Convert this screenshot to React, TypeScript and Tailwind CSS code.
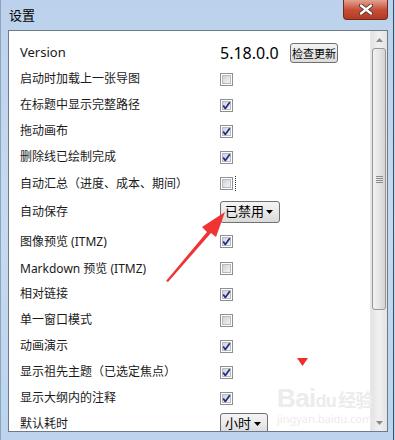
import React from 'react';

type Row =
  | { kind: 'check'; label: string; checked: boolean; h: number; focus?: boolean }
  | { kind: 'select'; label: string; value: string; h: number; w: string };

const rows: Row[] = [
  { kind: 'check', label: '启动时加载上一张导图', checked: false, h: 26 },
  { kind: 'check', label: '在标题中显示完整路径', checked: true, h: 26 },
  { kind: 'check', label: '拖动画布', checked: true, h: 26 },
  { kind: 'check', label: '删除线已绘制完成', checked: true, h: 26 },
  { kind: 'check', label: '自动汇总（进度、成本、期间）', checked: false, h: 27, focus: true },
  { kind: 'select', label: '自动保存', value: '已禁用', h: 30, w: 'w-[60px]' },
  { kind: 'check', label: '图像预览 (ITMZ)', checked: true, h: 29 },
  { kind: 'check', label: 'Markdown 预览 (ITMZ)', checked: false, h: 25 },
  { kind: 'check', label: '相对链接', checked: true, h: 26 },
  { kind: 'check', label: '单一窗口模式', checked: false, h: 26 },
  { kind: 'check', label: '动画演示', checked: true, h: 26 },
  { kind: 'check', label: '显示祖先主题（已选定焦点）', checked: true, h: 26 },
  { kind: 'check', label: '显示大纲内的注释', checked: true, h: 26 },
  { kind: 'select', label: '默认耗时', value: '小时', h: 26, w: 'w-[48px]' },
];

function CheckBox({ checked }: { checked: boolean }) {
  return (
    <svg width="13" height="13" viewBox="0 0 13 13">
      <defs>
        <linearGradient id="cbg" x1="0" y1="0" x2="1" y2="1">
          <stop offset="0" stopColor="#cbcfd5" />
          <stop offset="1" stopColor="#f6f6f6" />
        </linearGradient>
      </defs>
      <rect x="0.5" y="0.5" width="12" height="12" fill="#fff" stroke="#8e8f8f" />
      <rect x="2.5" y="2.5" width="8" height="8" fill="url(#cbg)" stroke="#b6bbc2" strokeWidth="1" />
      {checked && (
        <path d="M3.2 6.6 L5.3 9.4 L9.8 3.2" fill="none" stroke="#242a82" strokeWidth="1.7" strokeLinejoin="round" />
      )}
    </svg>
  );
}

function Select({ value, w }: { value: string; w: string }) {
  return (
    <div
      className={`${w} h-[22px] flex items-center justify-between pl-[4px] pr-[6px] rounded-[3px] border border-[#707070] bg-gradient-to-b from-[#f4f4f4] via-[#e9e9e9] to-[#d9d9d9] text-[13px] text-black`}
    >
      <span>{value}</span>
      <svg width="7" height="4" viewBox="0 0 7 4">
        <path d="M0 0 H7 L3.5 4 Z" fill="#000" />
      </svg>
    </div>
  );
}

export default function App() {
  return (
    <div
      className="relative w-[395px] h-[440px] overflow-hidden bg-gradient-to-b from-[#bcd2ec] via-[#c6daef] to-[#bcd4ee] border-l border-[#8ea3bd]"
      style={{ fontFamily: '"Noto Sans", "Noto Sans CJK SC", sans-serif' }}
    >
      {/* title bar */}
      <div className="h-[30px] flex items-start justify-between">
        <div className="pl-[8px] pt-[5px] text-[13px] text-black" style={{ fontFamily: '"Noto Sans CJK SC", sans-serif' }}>
          设置
        </div>
        <div className="mr-[7px] w-[45px] h-[20px] rounded-b-[4px] border border-t-0 border-[#6b2a22] bg-gradient-to-b from-[#e3a290] via-[#c7503a] to-[#b53a22] flex items-center justify-center">
          <svg width="14" height="11" viewBox="0 0 14 11">
            <path d="M2 1.5 L12 9.5 M12 1.5 L2 9.5" stroke="#4a2a28" strokeWidth="4" strokeLinecap="round" />
            <path d="M2 1.5 L12 9.5 M12 1.5 L2 9.5" stroke="#ffffff" strokeWidth="2.4" strokeLinecap="round" />
          </svg>
        </div>
      </div>

      {/* client area */}
      <div className="ml-[7px] mr-[7px] h-[402px] border border-[#6d7a89] bg-white flex">
        <div className="flex-1 pt-[9px] pl-[11px] flex flex-col overflow-hidden text-[12px] text-[#1a1a1a]">
          <div className="h-[26px] shrink-0 flex items-center">
            <span className="w-[200px] text-[13px]">Version</span>
            <span className="w-[70px] text-[16px] text-black">5.18.0.0</span>
            <button
              className="h-[20px] px-[1px] rounded-[3px] border border-[#707070] bg-gradient-to-b from-[#f3f3f3] to-[#dcdcdc] text-[11px] text-black"
              style={{ fontFamily: '"Noto Sans CJK SC", sans-serif' }}
            >
              检查更新
            </button>
          </div>
          {rows.map((r) => (
            <div key={r.label} className="shrink-0 flex items-center" style={{ height: r.h }}>
              <span className="w-[200px] whitespace-nowrap">{r.label}</span>
              {r.kind === 'check' ? (
                <div className="flex items-center">
                  <CheckBox checked={r.checked} />
                  {r.focus && <div className="ml-[1px] w-[2px] h-[15px] border-r border-dotted border-[#333]" />}
                </div>
              ) : (
                <Select value={r.value} w={r.w} />
              )}
            </div>
          ))}
        </div>

        {/* scrollbar */}
        <div className="w-[17px] flex flex-col bg-gradient-to-r from-[#e3e3e3] via-[#f0f0f0] to-[#e3e3e3] border-l border-[#e8e8e8]">
          <div className="h-[17px] flex items-center justify-center">
            <svg width="7" height="4" viewBox="0 0 7 4">
              <path d="M0 4 H7 L3.5 0 Z" fill="#8a8a8a" />
            </svg>
          </div>
          <div className="mx-[1px] h-[262px] rounded-[3px] border border-[#979797] bg-gradient-to-r from-[#f2f2f2] via-[#e6e6e6] to-[#d4d4d4] flex flex-col items-center justify-center gap-[1px]">
            <div className="w-[7px] h-[1px] bg-[#8d8d8d]" />
            <div className="w-[7px] h-[1px] bg-[#8d8d8d]" />
            <div className="w-[7px] h-[1px] bg-[#8d8d8d]" />
            <div className="w-[7px] h-[1px] bg-[#8d8d8d]" />
          </div>
          <div className="flex-1" />
          <div className="h-[17px] flex items-center justify-center">
            <svg width="7" height="4" viewBox="0 0 7 4">
              <path d="M0 0 H7 L3.5 4 Z" fill="#8a8a8a" />
            </svg>
          </div>
        </div>
      </div>

      {/* right dark frame edge */}
      <div className="absolute top-0 right-[1px] w-[1px] h-full bg-[#3d4f63]" />

      {/* watermark */}
      <div className="absolute left-[276px] top-[385px] text-[#ececec] leading-none pointer-events-none">
        <div className="text-[26px] font-bold tracking-tight" style={{ fontFamily: '"Liberation Sans", sans-serif' }}>
          Bai<span className="text-[18px]">du</span>
          <span className="text-[18px] ml-[2px]" style={{ fontFamily: '"Noto Sans CJK SC", sans-serif' }}>经验</span>
        </div>
        <div className="text-[11px] mt-[2px]">jingyan.baidu.com</div>
      </div>

      {/* red annotation */}
      <svg className="absolute inset-0 pointer-events-none" width="395" height="440" viewBox="0 0 395 440">
        <path d="M165 281 L206 232 L201 227 L224 212 L215 237 L210 233 L167 282 Z" fill="#f03434" />
        <path d="M296 358 L307 358 L301.5 366 Z" fill="#f02c2c" />
      </svg>
    </div>
  );
}
